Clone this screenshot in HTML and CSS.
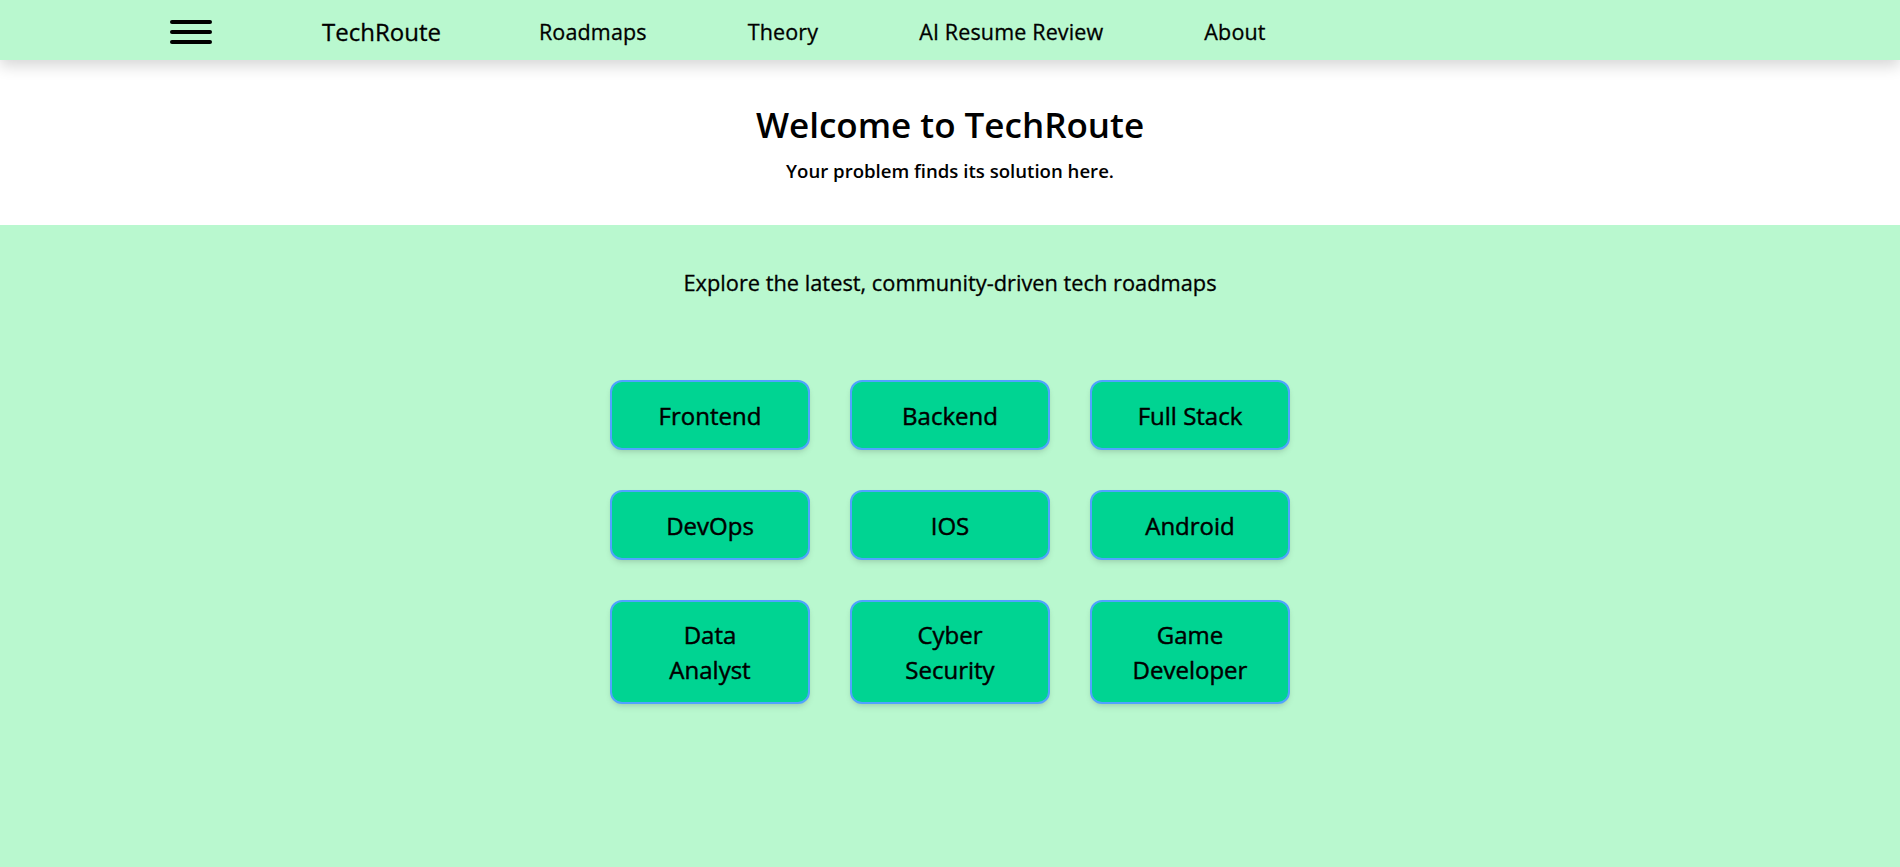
FILE: index.html
```html
<!DOCTYPE html>
<html lang="en">
<head>
<meta charset="utf-8">
<title>TechRoute</title>
<link rel="stylesheet" href="styles.css">
</head>
<body>
<header class="navbar">
  <button class="menu-btn" aria-label="Menu">
    <span class="bar"></span><span class="bar"></span><span class="bar"></span>
  </button>
  <a class="brand" href="#">TechRoute</a>
  <nav class="nav-links">
    <a href="#">Roadmaps</a>
    <a href="#">Theory</a>
    <a href="#">AI Resume Review</a>
    <a href="#">About</a>
  </nav>
</header>
<section class="hero">
  <h1 class="hero-title">Welcome to TechRoute</h1>
  <p class="hero-sub">Your problem finds its solution here.</p>
</section>
<main class="roadmaps">
  <p class="roadmaps-intro">Explore the latest, community-driven tech roadmaps</p>
  <div class="grid">
    <a class="card" href="#">Frontend</a>
    <a class="card" href="#">Backend</a>
    <a class="card" href="#">Full Stack</a>
    <a class="card" href="#">DevOps</a>
    <a class="card" href="#">IOS</a>
    <a class="card" href="#">Android</a>
    <a class="card tall" href="#">Data<br>Analyst</a>
    <a class="card tall" href="#">Cyber<br>Security</a>
    <a class="card tall" href="#">Game<br>Developer</a>
  </div>
</main>
</body>
</html>
```
FILE: styles.css
```css
* { box-sizing: border-box; }
html, body { margin: 0; padding: 0; }
body {
  font-family: "Open Sans", "Noto Sans", sans-serif;
  color: #000;
  background: #b9f8cf;
  min-height: 867px;
}
a { color: inherit; text-decoration: none; }

.navbar {
  position: relative;
  z-index: 2;
  height: 60px;
  background: #b9f8cf;
  display: flex;
  align-items: center;
  padding-left: 170px;
  padding-top: 3px;
  box-shadow: 0 6px 14px rgba(0,0,0,0.16);
}
.menu-btn {
  width: 42px;
  height: 24px;
  padding: 0;
  border: 0;
  background: none;
  display: flex;
  flex-direction: column;
  justify-content: space-between;
}
.bar {
  display: block;
  height: 4px;
  width: 42px;
  background: #000;
  border-radius: 2px;
}
.brand {
  margin-left: 110px;
  font-size: 24px;
  -webkit-text-stroke: 0.3px #000;
}
.nav-links {
  display: flex;
  gap: 101px;
  margin-left: 98px;
}
.nav-links a {
  font-size: 21.5px;
  letter-spacing: 0.15px;
  -webkit-text-stroke: 0.3px #000;
}

.hero {
  background: #fff;
  height: 165px;
  text-align: center;
  padding-top: 43px;
}
.hero-title {
  margin: 0;
  font-size: 35px;
  font-weight: 600;
  line-height: 44px;
}
.hero-sub {
  margin: 12px 0 0;
  font-size: 18.6px;
  font-weight: 600;
  line-height: 24px;
}

.roadmaps {
  background: #b9f8cf;
  padding-top: 44px;
  text-align: center;
}
.roadmaps-intro {
  margin: 0;
  font-size: 21.8px;
  line-height: 28px;
  -webkit-text-stroke: 0.3px #000;
}
.grid {
  margin: 83px auto 0;
  width: 680px;
  display: grid;
  grid-template-columns: repeat(3, 200px);
  gap: 40px;
}
.card {
  height: 70px;
  display: flex;
  align-items: center;
  justify-content: center;
  text-align: center;
  background: #00d492;
  border: 2px solid #51a2ff;
  border-radius: 12px;
  box-shadow: 0 4px 6px -1px rgba(0,0,0,0.1), 0 2px 4px -2px rgba(0,0,0,0.1);
  font-size: 24px;
  line-height: 35px;
  -webkit-text-stroke: 0.45px #000;
}
.card.tall { height: 104px; }
```
